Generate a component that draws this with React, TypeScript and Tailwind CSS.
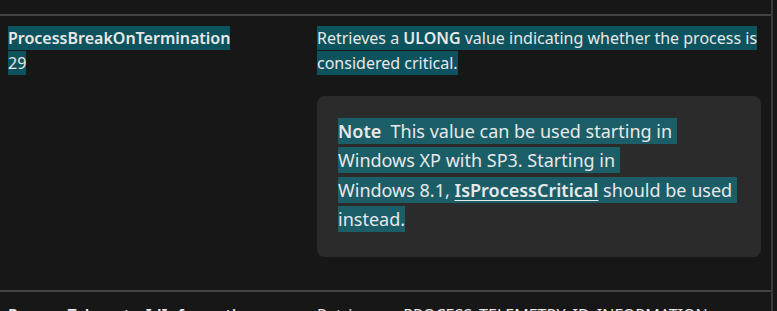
import React from "react";

const hl = "bg-[#0d535e] py-[1px]";
const nhl = "bg-[#1b5e68] py-[1px]";

export default function App() {
  return (
    <div
      className="w-[777px] h-[311px] overflow-hidden bg-[#171717] text-[#e8e8e8]"
      style={{ fontFamily: '"Noto Sans", "Open Sans", sans-serif' }}
    >
      <div className="w-[773px] h-full border-r-2 border-[#3c3c3c] flex flex-col">
        <div className="h-[14px] shrink-0" />
        <div className="border-t-2 border-[#444444] grid grid-cols-[317px_1fr] shrink-0">
          <div className="pl-[8px] pt-[10px] text-[16px] leading-[25px]">
            <div>
              <span className={`${hl} font-semibold`}>ProcessBreakOnTermination</span>
            </div>
            <div>
              <span className={hl}>29</span>
            </div>
          </div>
          <div className="pr-[10px] pt-[10px] pb-[33px]">
            <p className="text-[16px] leading-[25px] whitespace-nowrap">
              <span className={hl}>
                Retrieves a <span className="font-semibold">ULONG</span> value indicating whether the process is
              </span>
              <br />
              <span className={hl}>considered critical.</span>
            </p>
            <div className="mt-[20px] rounded-[8px] bg-[#2b2b2b] pl-[21px] pr-[16px] pt-[21px] pb-[22px] text-[18px] leading-[29.4px] whitespace-nowrap">
              <span className={nhl}>
                <span className="font-semibold">Note</span>&nbsp; This value can be used starting in&nbsp;
              </span>
              <br />
              <span className={nhl}>Windows XP with SP3. Starting in&nbsp;</span>
              <br />
              <span className={nhl}>
                Windows 8.1, <span className="font-semibold underline underline-offset-[3px]">IsProcessCritical</span> should be used&nbsp;
              </span>
              <br />
              <span className={nhl}>instead.</span>
            </div>
          </div>
        </div>
        <div className="border-t-2 border-[#444444] grid grid-cols-[317px_1fr] shrink-0">
          <div className="pl-[8px] pt-[11px] text-[16px] leading-[25px] font-semibold whitespace-nowrap">
            ProcessTelemetryIdInformation
          </div>
          <div className="pt-[11px] text-[16px] leading-[25px] whitespace-nowrap">Retrieves a PROCESS_TELEMETRY_ID_INFORMATION</div>
        </div>
      </div>
    </div>
  );
}
